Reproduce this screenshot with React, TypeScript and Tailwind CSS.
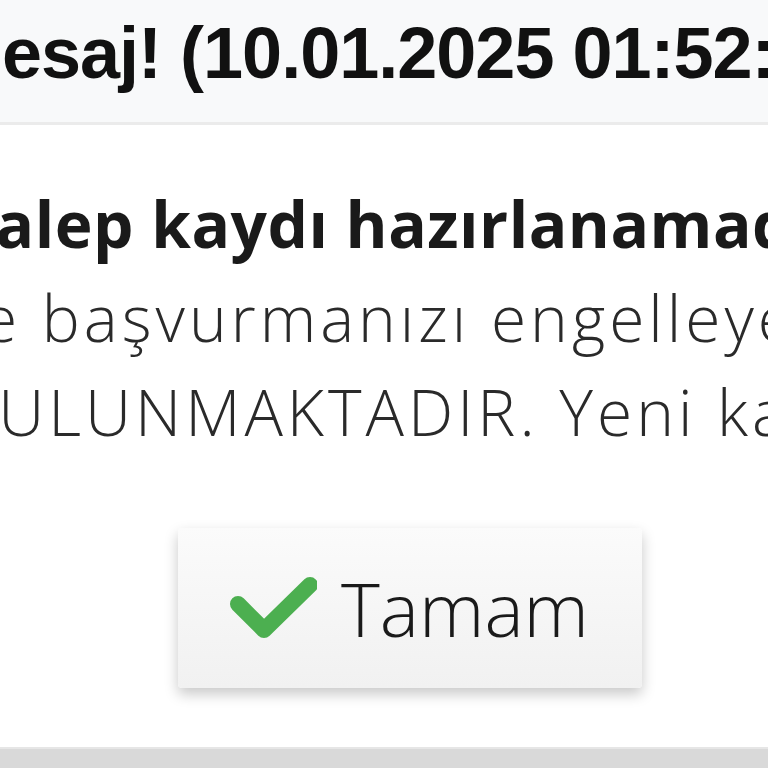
import React from "react";

export default function App() {
  return (
    <div className="w-[768px] h-[768px] overflow-hidden bg-white flex flex-col">
      <div className="h-[125px] shrink-0 bg-[#f8f9fa] border-b-[3px] border-[#ebebeb] flex items-start overflow-hidden">
        <div
          className="whitespace-nowrap ml-[-57px] mt-[12px] leading-[82px] text-[72px] font-bold text-[#111] tracking-[-1px]"
          style={{ fontFamily: '"Liberation Sans", Arial, sans-serif' }}
        >
          Mesaj! (10.01.2025 01:52:13)
        </div>
      </div>
      <div className="flex-1 flex flex-col overflow-hidden">
        <div className="pt-[52px] flex flex-col text-[#222]" style={{ fontFamily: '"Open Sans", sans-serif' }}>
          <div className="whitespace-nowrap ml-[-42px] h-[94px] leading-[94px] text-[64px] font-bold tracking-[0.5px] text-[#1a1a1a]">
            Talep kaydı hazırlanamadı.
          </div>
          <div className="whitespace-nowrap ml-[-55px] h-[94px] leading-[94px] text-[64px] font-light tracking-[4px] text-[#2a2a2a]">
            ile başvurmanızı engelleyen
          </div>
          <div className="whitespace-nowrap ml-[-46px] h-[94px] leading-[94px] text-[64px] font-light tracking-[4px] text-[#2a2a2a]">
            BULUNMAKTADIR. Yeni kayıt
          </div>
        </div>
        <div className="flex justify-center mt-[69px] pl-[52px]">
          <button className="w-[464px] h-[160px] bg-gradient-to-b from-[#fbfbfb] to-[#f1f1f1] rounded-[4px] shadow-[0_6px_14px_rgba(0,0,0,0.22)] flex items-center justify-center gap-[24px] pr-[10px]">
            <svg width="96" height="72" viewBox="0 0 96 72" className="mt-[6px]">
              <path d="M17 29 L43 55 L89 10" fill="none" stroke="#4caf50" strokeWidth="16" strokeLinecap="round" strokeLinejoin="round" />
            </svg>
            <span className="text-[74px] font-light text-[#1a1a1a]" style={{ fontFamily: '"Open Sans", sans-serif' }}>Tamam</span>
          </button>
        </div>
      </div>
      <div className="h-[21px] shrink-0 bg-[#d9d9d9] border-t-[2px] border-[#e6e6e6]" />
    </div>
  );
}
